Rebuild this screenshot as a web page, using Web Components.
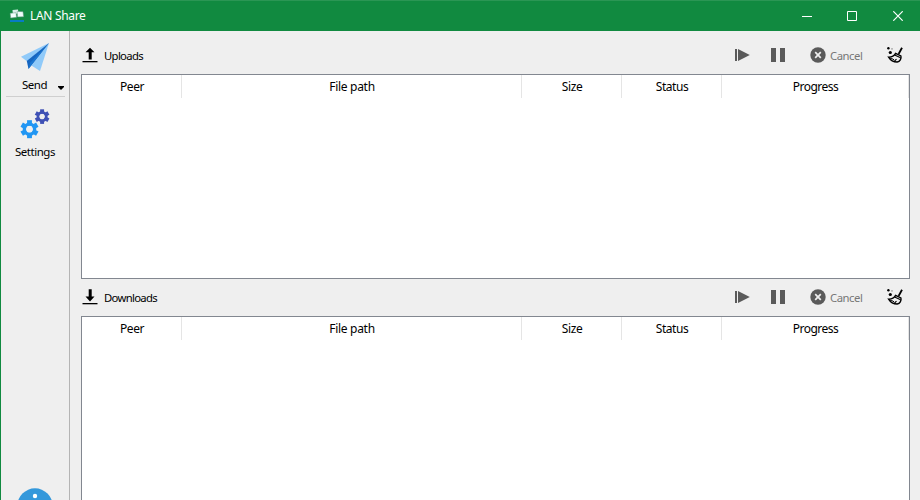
<!DOCTYPE html>
<html lang="en"><head><meta charset="utf-8"><title>LAN Share</title>
<style>html,body{margin:0;width:920px;height:500px;overflow:hidden;background:#efefef}body{font:12px "Noto Sans","Open Sans",sans-serif;color:#000}</style></head>
<body><lan-window></lan-window>
<script>
const define = (name, html, ready) => customElements.define(name, class extends HTMLElement {
  connectedCallback() {
    if (this.shadowRoot) return;
    const t = document.createElement('template');
    t.innerHTML = html;
    this.attachShadow({mode: 'open'}).append(t.content.cloneNode(true));
    if (ready) ready(this, this.shadowRoot);
  }
});

// Label whose letter spacing is adjusted to fill the width given by "w".
define('fit-text', `<style>:host{display:inline-block;white-space:nowrap;line-height:16px;height:16px}span{display:inline-block}</style><span><slot></slot></span>`, (el, root) => {
  const s = root.querySelector('span'), w = +el.getAttribute('w');
  const n = el.textContent.length;
  s.style.letterSpacing = (w - s.getBoundingClientRect().width) / n + 'px';
  el.style.width = w + 'px';
});

const icons = {
  upload: ['0 0 16 16', '<path d="M8 .8 12.5 5.3H9.7V12.5H6.7V5.3H3.5Z"/><path d="M.5 14h15V15.3H.5z"/>'],
  download: ['0 0 16 16', '<path d="M6.7.3h3V7.5h2.8L8 12.5 3.5 7.5h3.2z"/><path d="M.5 14h15V15.3H.5z"/>'],
  resume: ['0 0 16 16', '<path fill="#5a5a5a" d="M1 2h2v12H1zM4 2 15.8 8 4 14z"/>'],
  pause: ['0 0 16 16', '<path fill="#5a5a5a" d="M1 1h5v14H1zM10 1h5v14h-5z"/>'],
  cancel: ['0 0 16 16', '<circle cx="8" cy="8" r="7.7" fill="#5a5a5a"/><path d="m5.2 5.2 5.6 5.6m0-5.6-5.6 5.6" stroke="#efefef" stroke-width="1.7"/>'],
  broom: ['0 0 18 18', '<circle cx="2.4" cy="2.3" r="1.2"/><circle cx="6" cy="2.9" r=".8" fill="#999"/><circle cx="4.3" cy="6.5" r="1.6"/><path d="M16 1.8 12.6 8" stroke="#000" stroke-width="1.8"/><path d="M9.6 7.4 14.9 9.9C15.6 12.8 13.9 15.6 11.2 16 7.7 16 4.2 13.8 2.6 11.1 5.7 11.2 8.3 9.8 9.6 7.4Z" fill="none" stroke="#000" stroke-width="1.4"/><path d="m8.6 8.9 6 2.9M8.5 15l2-1.9" fill="none" stroke="#000" stroke-width="1.1"/><path d="M3.5 12q2.4.2 4.5 1.8" fill="none" stroke="#000"/>'],
  plane: ['0 0 32 32', '<path d="M30 2 2 15.8 8.2 20.5z" fill="#90caf9"/><path d="M30 2 12.4 24.5 21 30z" fill="#90caf9"/><path d="M30 2 7.8 20 9.5 28 13 23.6z" fill="#1565c0"/><path d="M30 2 11.2 21.8 9.5 28 13 23.6z" fill="#1976d2"/>'],
  info: ['0 0 36 36', '<circle cx="18" cy="18" r="17.7" fill="#3498db"/><circle cx="18" cy="8" r="2.2" fill="#fff"/><path d="M16 14h4v14h-4z" fill="#fff"/>'],
  lan: ['0 0 16 16', '<path d="M3.5 1 9 .4l.5 4.2-5.6.6z" fill="#d9efe9"/><path d="M1.2 4.3 7 3.7l.5 4.6-5.8.7z" fill="#f2fffc" stroke="#6d9486" stroke-width=".5"/><path d="m8.2 2.4 5.8.3.6 5-6 .2z" fill="#eefdf9" stroke="#6d9486" stroke-width=".5"/><path d="M1 11h14v2H1z" fill="#087bc5"/>'],
  min: ['0 0 10 10', '<path d="M0 5h10v1H0z" fill="#fff"/>'],
  max: ['0 0 10 10', '<path d="M.5.5h9v9h-9z" fill="none" stroke="#fff"/>'],
  close: ['0 0 10 10', '<path d="m.3.3 9.4 9.4m0-9.4L.3 9.7" fill="none" stroke="#fff" stroke-width="1.2"/>'],
  drop: ['0 0 6 4', '<path d="M0 0h6v1L3 4 0 1z"/>']
};
const gear = (x, y, r, c) => {
  let teeth = '';
  for (let i = 0; i < 6; i++) teeth += `<rect x="${x - r * .27}" y="${y - r}" width="${r * .54}" height="${r * .6}" transform="rotate(${i * 60} ${x} ${y})" fill="${c}"/>`;
  return `${teeth}<circle cx="${x}" cy="${y}" r="${r * .57}" fill="none" stroke="${c}" stroke-width="${r * .37}"/>`;
};
icons.gears = ['0 0 32 32', gear(10.5, 21.2, 9, '#2196f3') + gear(23.1, 8.6, 7.3, '#3f51b5')];
define('ui-icon', '<style>:host{display:block;flex:none}svg{display:block;width:100%;height:100%}</style><svg></svg>', (el, root) => {
  const [box, art] = icons[el.getAttribute('name')], s = root.querySelector('svg');
  s.setAttribute('viewBox', box); s.innerHTML = art;
  el.style.width = el.getAttribute('w') + 'px';
  el.style.height = (el.getAttribute('h') || el.getAttribute('w')) + 'px';
});

define('title-bar', `<style>:host{display:flex;box-sizing:border-box;height:31px;background:#118a40;border-top:1px solid #2b9654;color:#fff;align-items:center;padding:0 17px 0 9px}
.l{margin-top:1px}.t{margin-left:5px;margin-top:-1px}.c{display:flex;gap:35px;margin-left:auto}.c :last-child{margin-left:1px}.c ui-icon{margin-top:-1px}</style>
<ui-icon class="l" name="lan" w="16"></ui-icon><fit-text class="t" w="55.5">LAN Share</fit-text><div class="c"><ui-icon name="min" w="10"></ui-icon><ui-icon name="max" w="10"></ui-icon><ui-icon name="close" w="10"></ui-icon></div>`);

define('side-bar', `<style>:host{display:flex;flex-direction:column;align-items:center;width:68px;border-right:1px solid #b4b4b4;box-sizing:content-box;height:469px;overflow:hidden;font:11.5px "Noto Sans",sans-serif}
.b{display:flex;flex-direction:column;align-items:center}.send{box-sizing:border-box;height:65px;padding-top:10px}.row{display:grid;grid-template-columns:68px;justify-items:center;margin-top:4px}
.row ui-icon{grid-area:1/1;justify-self:end;align-self:end;margin:0 5px 3px 0}.row fit-text{grid-area:1/1;margin-right:1px}hr{width:59px;height:1px;border:0;background:#cfcfcf;margin:0}.set{padding-top:11px}.set fit-text{margin-top:4px}.info{margin-top:auto;margin-bottom:-24px}</style>
<div class="b send"><ui-icon name="plane" w="32"></ui-icon><div class="row"><fit-text w="25">Send</fit-text><ui-icon name="drop" w="6" h="4"></ui-icon></div></div><hr><div class="b set"><ui-icon name="gears" w="32"></ui-icon><fit-text w="40">Settings</fit-text></div><ui-icon class="info" name="info" w="36"></ui-icon>`);

define('transfer-bar', `<style>:host{display:flex;align-items:center;height:37px;font:11.3px "Noto Sans",sans-serif;padding:0 6px 0 1px}
ui-icon{margin-top:-1px}.title{margin-left:6px}.actions{display:flex;align-items:center;margin-left:auto}.pause{margin-left:20px}.cancel{margin-left:24px}.c{margin-left:4px;color:#777}.broom{margin-left:23.5px}</style>
<ui-icon name="upload" w="16"></ui-icon><div class="title"><slot></slot></div><div class="actions"><ui-icon name="resume" w="16"></ui-icon><ui-icon class="pause" name="pause" w="16"></ui-icon><ui-icon class="cancel" name="cancel" w="16"></ui-icon><fit-text class="c" w="32.5">Cancel</fit-text><ui-icon class="broom" name="broom" w="18"></ui-icon></div>`);
define('transfer-table', `<style>:host{display:block;box-sizing:border-box;width:829px;height:205px;background:#fff;border:1px solid #828790}.h{display:grid;grid-template-columns:100px 340px 100px 100px 187px;height:23px}.h div{display:flex;justify-content:center;align-items:center;border-right:1px solid #e5e5e5;padding-top:1px;padding-left:1px;box-sizing:border-box}</style>
<div class="h"><div><fit-text w="24">Peer</fit-text></div><div><fit-text w="45.5">File path</fit-text></div><div><fit-text w="20.5">Size</fit-text></div><div><fit-text w="32.5">Status</fit-text></div><div><fit-text w="45.5">Progress</fit-text></div></div>`);
define('transfer-panel', `<style>:host{display:block}</style><transfer-bar></transfer-bar><transfer-table></transfer-table>`, (el, root) => {
  const bar = root.querySelector('transfer-bar'), down = el.getAttribute('kind') === 'download';
  bar.innerHTML = down ? '<fit-text w="53">Downloads</fit-text>' : '<fit-text w="39">Uploads</fit-text>';
  if (down) bar.shadowRoot.querySelector('ui-icon').replaceWith(Object.assign(document.createElement('template'), {innerHTML: '<ui-icon name="download" w="16"></ui-icon>'}).content.cloneNode(true));
});
define('lan-window', `<style>:host{display:block;height:500px;overflow:hidden}.body{display:flex;box-sizing:border-box;height:469px;border-left:1px solid #118a40}.main{padding:6px 10px 0 11px;flex:1}</style>
<title-bar></title-bar><div class="body"><side-bar></side-bar><div class="main"><transfer-panel kind="upload"></transfer-panel><transfer-panel kind="download"></transfer-panel></div></div>`);
</script></body></html>
